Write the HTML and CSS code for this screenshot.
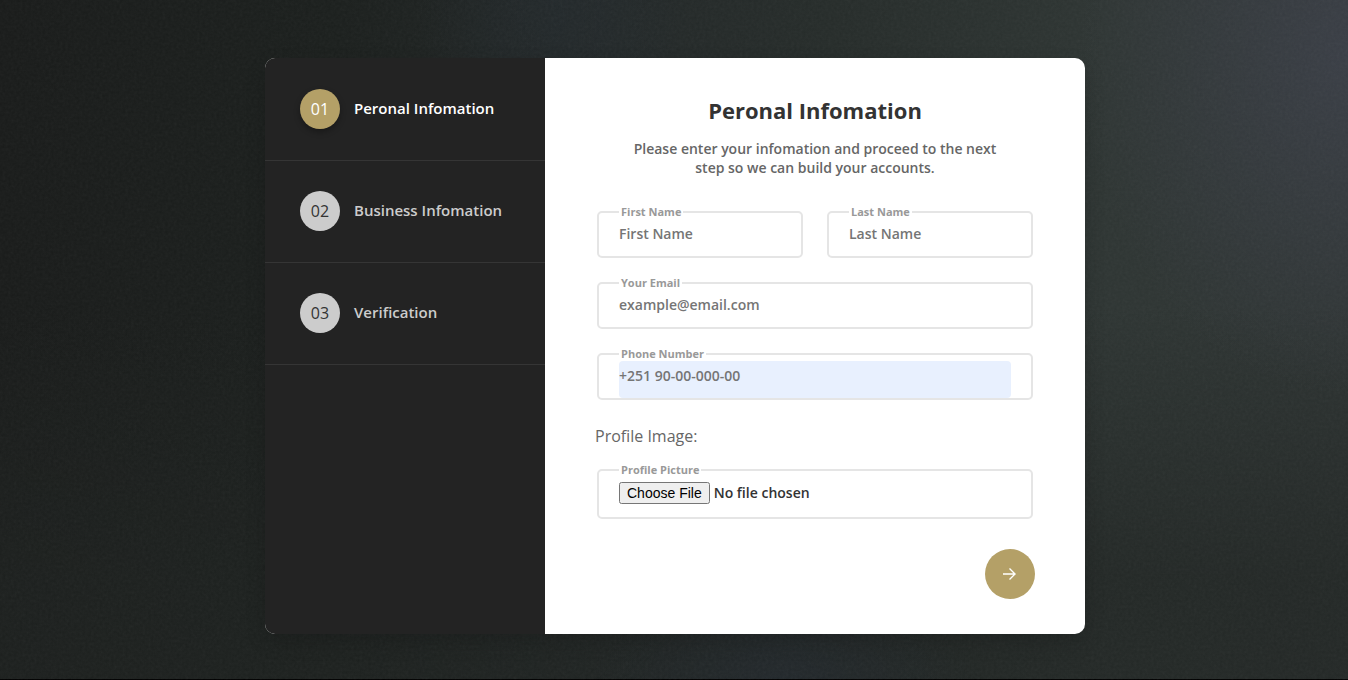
FILE: index.html
```html
<!DOCTYPE html>
<html lang="en">
<head>
<meta charset="utf-8">
<meta name="viewport" content="width=device-width, initial-scale=1">
<title>Peronal Infomation</title>
<link rel="stylesheet" href="styles.css">
</head>
<body>
<svg class="grain" aria-hidden="true">
  <filter id="grain"><feTurbulence type="fractalNoise" baseFrequency="0.35" numOctaves="2" seed="4"/><feColorMatrix type="saturate" values="0"/></filter>
  <rect width="100%" height="100%" filter="url(#grain)"/>
</svg>
<main class="page">
  <div class="wizard">
    <nav class="steps" aria-label="Steps">
      <a class="step step-current" href="#personal" aria-current="step"><span class="step-number">01</span><span class="step-title">Peronal Infomation</span></a>
      <a class="step" href="#business"><span class="step-number">02</span><span class="step-title">Business Infomation</span></a>
      <a class="step" href="#verification"><span class="step-number">03</span><span class="step-title">Verification</span></a>
    </nav>
    <form class="panel" id="personal">
      <h1 class="title">Peronal Infomation</h1>
      <p class="intro">Please enter your infomation and proceed to the next step so we can build your accounts.</p>
      <div class="fields">
        <div class="pair">
          <fieldset class="field"><legend><label for="first">First Name</label></legend><input class="control" id="first" type="text" placeholder="First Name"></fieldset>
          <fieldset class="field"><legend><label for="last">Last Name</label></legend><input class="control" id="last" type="text" placeholder="Last Name"></fieldset>
        </div>
        <fieldset class="field"><legend><label for="email">Your Email</label></legend><input class="control" id="email" type="email" placeholder="example@email.com"></fieldset>
        <fieldset class="field"><legend><label for="phone">Phone Number</label></legend><input class="control control-filled" id="phone" type="tel" placeholder="+251 90-00-000-00"></fieldset>
      </div>
      <p class="group-title">Profile Image:</p>
      <fieldset class="field"><legend><label for="picture">Profile Picture</label></legend><input class="control control-file" id="picture" type="file"></fieldset>
      <button class="next" type="button" aria-label="Next">
        <svg width="14" height="14" viewBox="0 0 14 14" fill="none" stroke="currentColor" stroke-width="1.4" aria-hidden="true"><path d="M0 7h12.500M6.500 1.500l5.500 5.500L6.500 12.500"/></svg>
      </button>
    </form>
  </div>
</main>
</body>
</html>
```
FILE: styles.css
```css
* { box-sizing: border-box; }

body {
  margin: 0;
  min-height: 100vh;
  display: flex;
  font-family: "Open Sans", sans-serif;
  color: #666;
  border-bottom: 1px solid #000;
  background:
    radial-gradient(ellipse 20% 50% at 100% 8%, rgba(60, 64, 73, .85), transparent),
    radial-gradient(ellipse 10% 30% at 41% 0, rgba(36, 43, 47, .6), transparent),
    radial-gradient(ellipse 14% 14% at 58% 100%, rgba(35, 41, 46, .8), transparent),
    linear-gradient(180deg, transparent 45%, rgba(30, 34, 32, .65) 85%),
    linear-gradient(90deg, #191b1a, #1b1f1d 25%, #232828 45%, #262c2a 62%, #2e3533 82%, #2e3433);
}

.grain {
  position: absolute;
  inset: 0;
  width: 100%;
  height: 100%;
  opacity: .05;
}

.page {
  position: relative;
  flex: 1;
  display: flex;
  justify-content: center;
  align-items: flex-start;
  padding: 58px 14px 45px 16px;
}

.wizard {
  width: 100%;
  max-width: 820px;
  display: grid;
  grid-template-columns: 280px 1fr;
  background: #fff;
  border-radius: 10px;
  overflow: hidden;
  box-shadow: 0 8px 20px rgba(0, 0, 0, .15);
}

.steps { padding-top: 1px; background: #232323; }

.step {
  display: flex;
  align-items: center;
  gap: 14px;
  padding: 30px 35px 31px;
  border-bottom: 1px solid #353535;
  color: #ccc;
  text-decoration: none;
}

.step-number {
  width: 40px;
  height: 40px;
  flex: none;
  border-radius: 50%;
  background: #ccc;
  color: #333;
  font-size: 16px;
  font-weight: 400;
  line-height: 40px;
  text-align: center;
}

.step-title { padding-bottom: 2px; font-size: 15px; font-weight: 600; white-space: nowrap; }
.step-current { color: #fff; }
.step-current .step-number {
  background: #b4a067;
  color: #fff;
  box-shadow: 0 3px 6px rgba(0, 0, 0, .3);
}

.panel {
  display: flex;
  flex-direction: column;
  padding: 37px 50px 35px;
}

.title {
  margin: 0 0 14px;
  color: #333;
  font-size: 22px;
  font-weight: 700;
  line-height: 30px;
  text-align: center;
}

.intro {
  width: 100%;
  max-width: 380px;
  margin: 0 auto 27px;
  font-size: 14px;
  font-weight: 600;
  line-height: 19px;
  text-align: center;
}

.fields { display: grid; gap: 17px; }
.pair { display: grid; grid-template-columns: 1fr 1fr; gap: 20px; }

.field {
  min-width: 0;
  margin: 0 2px;
  padding: 0 20px;
  border: 2px solid #e5e5e5;
  border-radius: 5px;
}

.field legend {
  padding: 0 2px;
  color: #999;
  font-size: 11px;
  font-weight: 700;
  line-height: 15px;
}

.control {
  display: block;
  width: 100%;
  padding: 5px 0 13px;
  border: 0;
  border-radius: 4px;
  outline: 0;
  background: transparent;
  color: #333;
  font: 600 14px/19px "Open Sans", sans-serif;
}

.control::placeholder { color: #757575; }
.control-filled { background: #e8f0fe; }
.control-file::file-selector-button { font: 400 14px/16px "Liberation Sans", Arial, sans-serif; }

.group-title {
  margin: 25px 0 15px;
  font-size: 16px;
  font-weight: 400;
  line-height: 22px;
}

.next {
  display: grid;
  place-items: center;
  align-self: flex-end;
  width: 50px;
  height: 50px;
  margin-top: 30px;
  padding: 0;
  border: 0;
  border-radius: 50%;
  background: #b4a067;
  color: #fff;
}
```
